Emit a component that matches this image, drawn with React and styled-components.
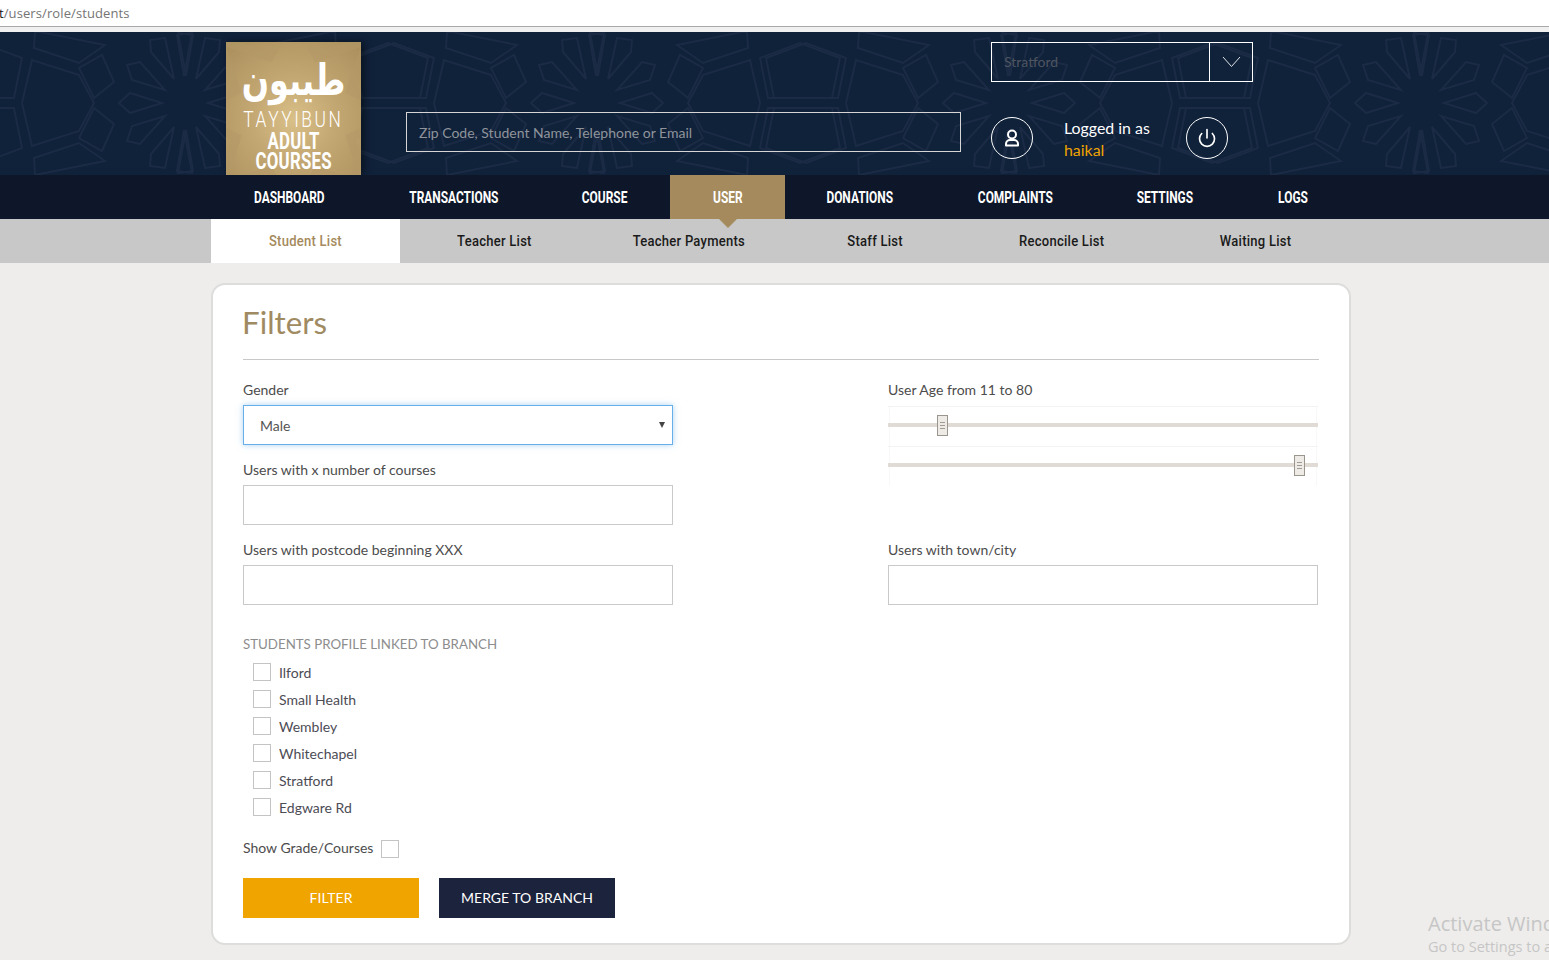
import React from "react";
import styled, { createGlobalStyle } from "styled-components";
import { Power } from "lucide-react";

const Global = createGlobalStyle`
  html, body { margin: 0; padding: 0; height: 960px; overflow: hidden; background: #eeedeb; }
  * { box-sizing: border-box; }
  body { font-family: Lato, "Open Sans", sans-serif; color: #4a4a4a; }
`;

const Page = styled.div`
  position: relative;
  width: 1549px;
  height: 960px;
  overflow: hidden;
`;

const AddressBar = styled.div`
  height: 32px;
  background: #fff;
  border-bottom: 5px solid #f0f0f0;
  font: 13px/26px "Open Sans", sans-serif;
  letter-spacing: 0.1px;
  color: #757575;
`;
const AddressInner = styled.div`
  height: 27px;
  border-bottom: 1px solid #a9a9a9;
  white-space: nowrap;
`;
const Host = styled.span`
  color: #111;
  margin-left: -1px;
`;

const Header = styled.header`
  position: relative;
  height: 143px;
  background: #10213a;
  display: flex;
  align-items: flex-start;
  padding-left: 226px;
  overflow: hidden;
`;
const Pattern = styled.svg`
  position: absolute;
  left: 0;
  top: 0;
`;
const Logo = styled.div`
  position: relative;
  z-index: 1;
  width: 135px;
  height: 133px;
  margin-top: 10px;
  flex: none;
  overflow: hidden;
  color: #fff;
  background: radial-gradient(circle at 50% 58%, #d9bf88 0%, #c4a873 40%, #a98e5c 100%);
  box-shadow: 3px 0 8px rgba(0, 0, 0, 0.45);
  display: flex;
  flex-direction: column;
  align-items: center;
`;
const LogoStar = styled.svg`
  position: absolute;
  left: 0;
  top: 0;
`;
const LogoArabic = styled.div`
  position: relative;
  height: 54px;
  margin-top: 13px;
  font: 700 32px/54px "DejaVu Sans", sans-serif;
  transform: translateY(-2px) scale(1, 1.35);
  white-space: nowrap;
`;
const LogoName = styled.div`
  position: relative;
  font: 300 22px/22px Roboto, sans-serif;
  letter-spacing: 3.2px;
  white-space: nowrap;
  transform: scaleX(0.79);
`;
const LogoSub = styled.div`
  position: relative;
  font: 700 24px/20px Roboto, sans-serif;
  letter-spacing: 0.4px;
  text-align: center;
  transform: scaleX(0.7);
`;

const SearchBox = styled.div`
  position: relative;
  z-index: 1;
  width: 555px;
  height: 40px;
  margin: 80px 0 0 45px;
  flex: none;
  border: 1px solid #d5d5d5;
  padding: 0 12px;
  font: 14px/40px Lato, sans-serif;
  color: #8f949b;
`;
const UserColumn = styled.div`
  position: relative;
  z-index: 1;
  margin: 10px 0 0 30px;
  width: 262px;
`;
const BranchSelect = styled.div`
  height: 40px;
  border: 1px solid #fff;
  display: flex;
`;
const BranchValue = styled.div`
  flex: 1;
  padding-left: 12px;
  font: 14px/38px Lato, sans-serif;
  color: #4e5560;
`;
const BranchCaret = styled.div`
  width: 43px;
  border-left: 1px solid #fff;
  display: flex;
  align-items: center;
  justify-content: center;
`;
const UserRow = styled.div`
  display: flex;
  align-items: center;
  height: 42px;
  margin-top: 35px;
`;
const CircleIcon = styled.div`
  width: 42px;
  height: 42px;
  flex: none;
  border: 1px solid #fff;
  border-radius: 50%;
  display: flex;
  align-items: center;
  justify-content: center;
  color: #fff;
`;
const Logged = styled.div`
  width: 122px;
  margin-left: 31px;
  padding-top: 2px;
  font: 15.9px/22px Lato, sans-serif;
  color: #fff;
`;
const Username = styled.div`
  color: #f0a400;
`;

const MainNav = styled.nav`
  height: 44px;
  background: #0e1729;
  padding-left: 211px;
  display: flex;
`;
const NavItem = styled.div`
  position: relative;
  width: ${(p) => p.$w}px;
  background: ${(p) => (p.$active ? "#a48a5c" : "transparent")};
  color: #fff;
  text-align: center;
  white-space: nowrap;
  ${(p) =>
    p.$active &&
    `&::after {
      content: "";
      position: absolute;
      left: 50%;
      top: 100%;
      margin-left: -9px;
      border: 9px solid transparent;
      border-top-color: #a48a5c;
      border-bottom: 0;
    }`}
`;
const NavLabel = styled.span`
  display: inline-block;
  font: 700 16px/45px Roboto, sans-serif;
  transform: scaleX(0.745);
`;
const SubNav = styled.nav`
  height: 44px;
  background: #c8c8c8;
  padding-left: 211px;
  display: flex;
`;
const SubItem = styled.div`
  width: ${(p) => p.$w}px;
  background: ${(p) => (p.$active ? "#fff" : "transparent")};
  color: ${(p) => (p.$active ? "#a48a5c" : "#1a1a1a")};
  text-align: center;
  white-space: nowrap;
`;
const SubLabel = styled.span`
  display: inline-block;
  font: 500 15.5px/45px Roboto, sans-serif;
  letter-spacing: 0.3px;
  transform: scaleX(0.84);
`;

const Card = styled.main`
  width: 1140px;
  height: 662px;
  margin: 20px 0 0 211px;
  padding: 0 30px;
  background: #fff;
  border: 2px solid #dddddb;
  border-radius: 14px;
`;
const Title = styled.h2`
  margin: 0;
  height: 75px;
  border-bottom: 1px solid #c8c8c8;
  font: 400 31.3px/74px Lato, sans-serif;
  color: #a08a62;
  text-indent: -1px;
`;
const FormGrid = styled.div`
  display: grid;
  grid-template-columns: 430px 430px;
  column-gap: 215px;
  grid-auto-rows: 80px;
  margin-top: 20px;
`;
const Field = styled.div`
  display: flex;
  flex-direction: column;
  ${(p) => p.$span && `grid-row: span ${p.$span};`}
`;
const Label = styled.label`
  font: 14px/20px Lato, sans-serif;
  color: #4c4c4c;
  height: 25px;
  flex: none;
`;
const TextBox = styled.div`
  width: 430px;
  height: 40px;
  flex: none;
  background: #fff;
  border: 1px solid ${(p) => (p.$focus ? "#66afe9" : "#c9c9c9")};
  ${(p) => p.$focus && "box-shadow: 0 0 6px rgba(102, 175, 233, 0.55);"}
  position: relative;
  padding-left: 16px;
  font: 14px/40px Lato, sans-serif;
  color: #555;
`;
const SelectCaret = styled.span`
  position: absolute;
  right: 7px;
  top: 16px;
  border: 3.5px solid transparent;
  border-top: 6px solid #444;
  border-bottom: 0;
`;
const Sliders = styled.div`
  margin-top: 1px;
`;
const SliderRow = styled.div`
  position: relative;
  width: 430px;
  height: 40px;
  border-top: 1px solid #f3f3f3;
  padding-top: 16px;
  &::before {
    content: "";
    position: absolute;
    top: 0;
    bottom: 0;
    left: 1px;
    right: 1px;
    border-left: 1px solid #f8f8f8;
    border-right: 1px solid #f8f8f8;
  }
`;
const Track = styled.div`
  position: relative;
  width: 100%;
  height: 4px;
  background: #e0dcd5;
`;
const Handle = styled.div`
  position: absolute;
  left: ${(p) => p.$left}px;
  top: 8px;
  width: 11px;
  height: 21px;
  background: #eeebe6;
  border: 1px solid #9a958d;
  display: flex;
  flex-direction: column;
  align-items: center;
  justify-content: center;
  gap: 2px;
`;
const Grip = styled.i`
  display: block;
  width: 5px;
  height: 1px;
  background: #a09b93;
`;
const SectionLabel = styled.div`
  margin-top: 15px;
  font: 13.3px/18px Lato, sans-serif;
  color: #8d8d8d;
  text-transform: uppercase;
`;
const BranchList = styled.div`
  margin-top: 10px;
  padding-left: 10px;
  display: flex;
  flex-direction: column;
  gap: 9px;
`;
const CheckRow = styled.div`
  display: flex;
  align-items: center;
  height: 18px;
  font: 14px/20px Lato, sans-serif;
  color: #4c4c55;
`;
const CheckText = styled.span`
  margin-top: ${(p) => p.$nudge ?? 2}px;
`;
const CheckBox = styled.span`
  width: 18px;
  height: 18px;
  flex: none;
  border: 1px solid #c4c4c4;
  background: #fff;
  margin-right: ${(p) => p.$gap || 0}px;
  margin-left: ${(p) => p.$left || 0}px;
`;
const GradeRow = styled(CheckRow)`
  margin-top: 24px;
  color: #4c4c4c;
`;
const Buttons = styled.div`
  display: flex;
  gap: 20px;
  margin-top: 20px;
`;
const Button = styled.button`
  width: 176px;
  height: 40px;
  border: 0;
  border-radius: 0;
  padding: 0;
  font: 14px/40px Lato, sans-serif;
  color: #fff;
  background: ${(p) => p.$bg};
`;
const Watermark = styled.div`
  position: absolute;
  left: 1428px;
  top: 911px;
  width: 121px;
  overflow: hidden;
  white-space: nowrap;
  color: #c6c6c6;
  font: 14.5px/20px "Open Sans", sans-serif;
`;
const WatermarkTitle = styled.div`
  font-size: 20px;
  line-height: 26px;
`;

const poly = (pts, fx, fy, cx) =>
  pts.map(([x, y]) => `${cx + x * fx},${71 + y * fy}`).join(" ");

const mirrored = [
  [[-8, -68], [7, -70], [-1, -27]],
  [[20, -65], [35, -63], [34, -51], [11, -24]],
  [[45, -41], [58, -38], [53, -23], [20, -13]],
  [[71, -21], [83, -48], [106, -35], [91, -5]],
  [[80, -58], [106, -40], [151, -55], [150, -72]],
  [[163, -45], [203, -60], [243, -45], [235, -5], [171, -5]],
];
const sideways = [
  [[23, 0], [55, -10], [66, 0], [55, 10]],
  [[106, -28], [153, -43], [163, 0], [153, 43], [106, 28], [91, 0]],
];

const patternShapes = [185, 597, 1009, 1421].flatMap((cx) => [
  ...mirrored.flatMap((pts) =>
    [[1, 1], [-1, 1], [1, -1], [-1, -1]].map(([fx, fy]) => poly(pts, fx, fy, cx))
  ),
  ...sideways.flatMap((pts) => [poly(pts, 1, 1, cx), poly(pts, -1, 1, cx)]),
]);

const starPoints = Array.from({ length: 16 }, (_, i) => {
  const r = i % 2 ? 62 : 104;
  const a = (i * Math.PI) / 8 - Math.PI / 2;
  return `${67.5 + r * Math.cos(a)},${72 + r * Math.sin(a)}`;
}).join(" ");

const navItems = [
  ["DASHBOARD", 156],
  ["TRANSACTIONS", 173],
  ["COURSE", 130],
  ["USER", 115, true],
  ["DONATIONS", 150],
  ["COMPLAINTS", 160],
  ["SETTINGS", 140],
  ["LOGS", 115],
];
const subItems = [
  ["Student List", 189, true],
  ["Teacher List", 189],
  ["Teacher Payments", 200],
  ["Staff List", 173],
  ["Reconcile List", 199],
  ["Waiting List", 190],
];
const branches = ["Ilford", "Small Health", "Wembley", "Whitechapel", "Stratford", "Edgware Rd"];

const UserGlyph = () => (
  <svg width="18" height="18" viewBox="0 0 18 18" fill="none" stroke="#fff" strokeWidth="2">
    <circle cx="9" cy="5.5" r="4" />
    <path d="M3 16.500v-1.500c0-2.400 1.800-4 4-4h4c2.200 0 4 1.600 4 4v1.500z" strokeLinejoin="round" />
  </svg>
);

const CaretGlyph = () => (
  <svg width="19" height="12" viewBox="0 0 19 12" fill="none" stroke="#dfe3e8" strokeWidth="1">
    <path d="M1 1l8.500 9.500L18 1" />
  </svg>
);

const Slider = ({ left }) => (
  <SliderRow>
    <Track />
    <Handle $left={left}>
      <Grip />
      <Grip />
      <Grip />
    </Handle>
  </SliderRow>
);

export default function App() {
  return (
    <Page>
      <Global />
      <AddressBar>
        <AddressInner>
          <Host>t</Host>/users/role/students
        </AddressInner>
      </AddressBar>
      <Header>
        <Pattern width="1549" height="143" viewBox="0 0 1549 143" fill="none" stroke="#1b2b45" strokeWidth="2">
          {patternShapes.map((p, i) => (
            <polygon key={i} points={p} />
          ))}
        </Pattern>
        <Logo>
          <LogoStar width="135" height="133" viewBox="0 0 135 133" fill="none" stroke="#b49a68" strokeWidth="9" opacity="0.55">
            <polygon points={starPoints} />
          </LogoStar>
          <LogoArabic>طيبون</LogoArabic>
          <LogoName>TAYYIBUN</LogoName>
          <LogoSub>
            ADULT
            <br />
            COURSES
          </LogoSub>
        </Logo>
        <SearchBox>Zip Code, Student Name, Telephone or Email</SearchBox>
        <UserColumn>
          <BranchSelect>
            <BranchValue>Stratford</BranchValue>
            <BranchCaret>
              <CaretGlyph />
            </BranchCaret>
          </BranchSelect>
          <UserRow>
            <CircleIcon>
              <UserGlyph />
            </CircleIcon>
            <Logged>
              Logged in as
              <Username>haikal</Username>
            </Logged>
            <CircleIcon>
              <Power size={20} strokeWidth={2} />
            </CircleIcon>
          </UserRow>
        </UserColumn>
      </Header>
      <MainNav>
        {navItems.map(([label, w, active]) => (
          <NavItem key={label} $w={w} $active={active}>
            <NavLabel>{label}</NavLabel>
          </NavItem>
        ))}
      </MainNav>
      <SubNav>
        {subItems.map(([label, w, active]) => (
          <SubItem key={label} $w={w} $active={active}>
            <SubLabel>{label}</SubLabel>
          </SubItem>
        ))}
      </SubNav>
      <Card>
        <Title>Filters</Title>
        <FormGrid>
          <Field>
            <Label>Gender</Label>
            <TextBox $focus>
              Male
              <SelectCaret />
            </TextBox>
          </Field>
          <Field $span={2}>
            <Label>User Age from 11 to 80</Label>
            <Sliders>
              <Slider left={49} />
              <Slider left={406} />
            </Sliders>
          </Field>
          <Field>
            <Label>Users with x number of courses</Label>
            <TextBox />
          </Field>
          <Field>
            <Label>Users with postcode beginning XXX</Label>
            <TextBox />
          </Field>
          <Field>
            <Label>Users with town/city</Label>
            <TextBox />
          </Field>
        </FormGrid>
        <SectionLabel>Students profile linked to branch</SectionLabel>
        <BranchList>
          {branches.map((b) => (
            <CheckRow key={b}>
              <CheckBox $gap={8} />
              <CheckText>{b}</CheckText>
            </CheckRow>
          ))}
        </BranchList>
        <GradeRow>
          <CheckText $nudge={-2}>Show Grade/Courses</CheckText>
          <CheckBox $left={8} />
        </GradeRow>
        <Buttons>
          <Button $bg="#f0a400">FILTER</Button>
          <Button $bg="#1c233c">MERGE TO BRANCH</Button>
        </Buttons>
      </Card>
      <Watermark>
        <WatermarkTitle>Activate Windows</WatermarkTitle>
        Go to Settings to activate Windows.
      </Watermark>
    </Page>
  );
}
